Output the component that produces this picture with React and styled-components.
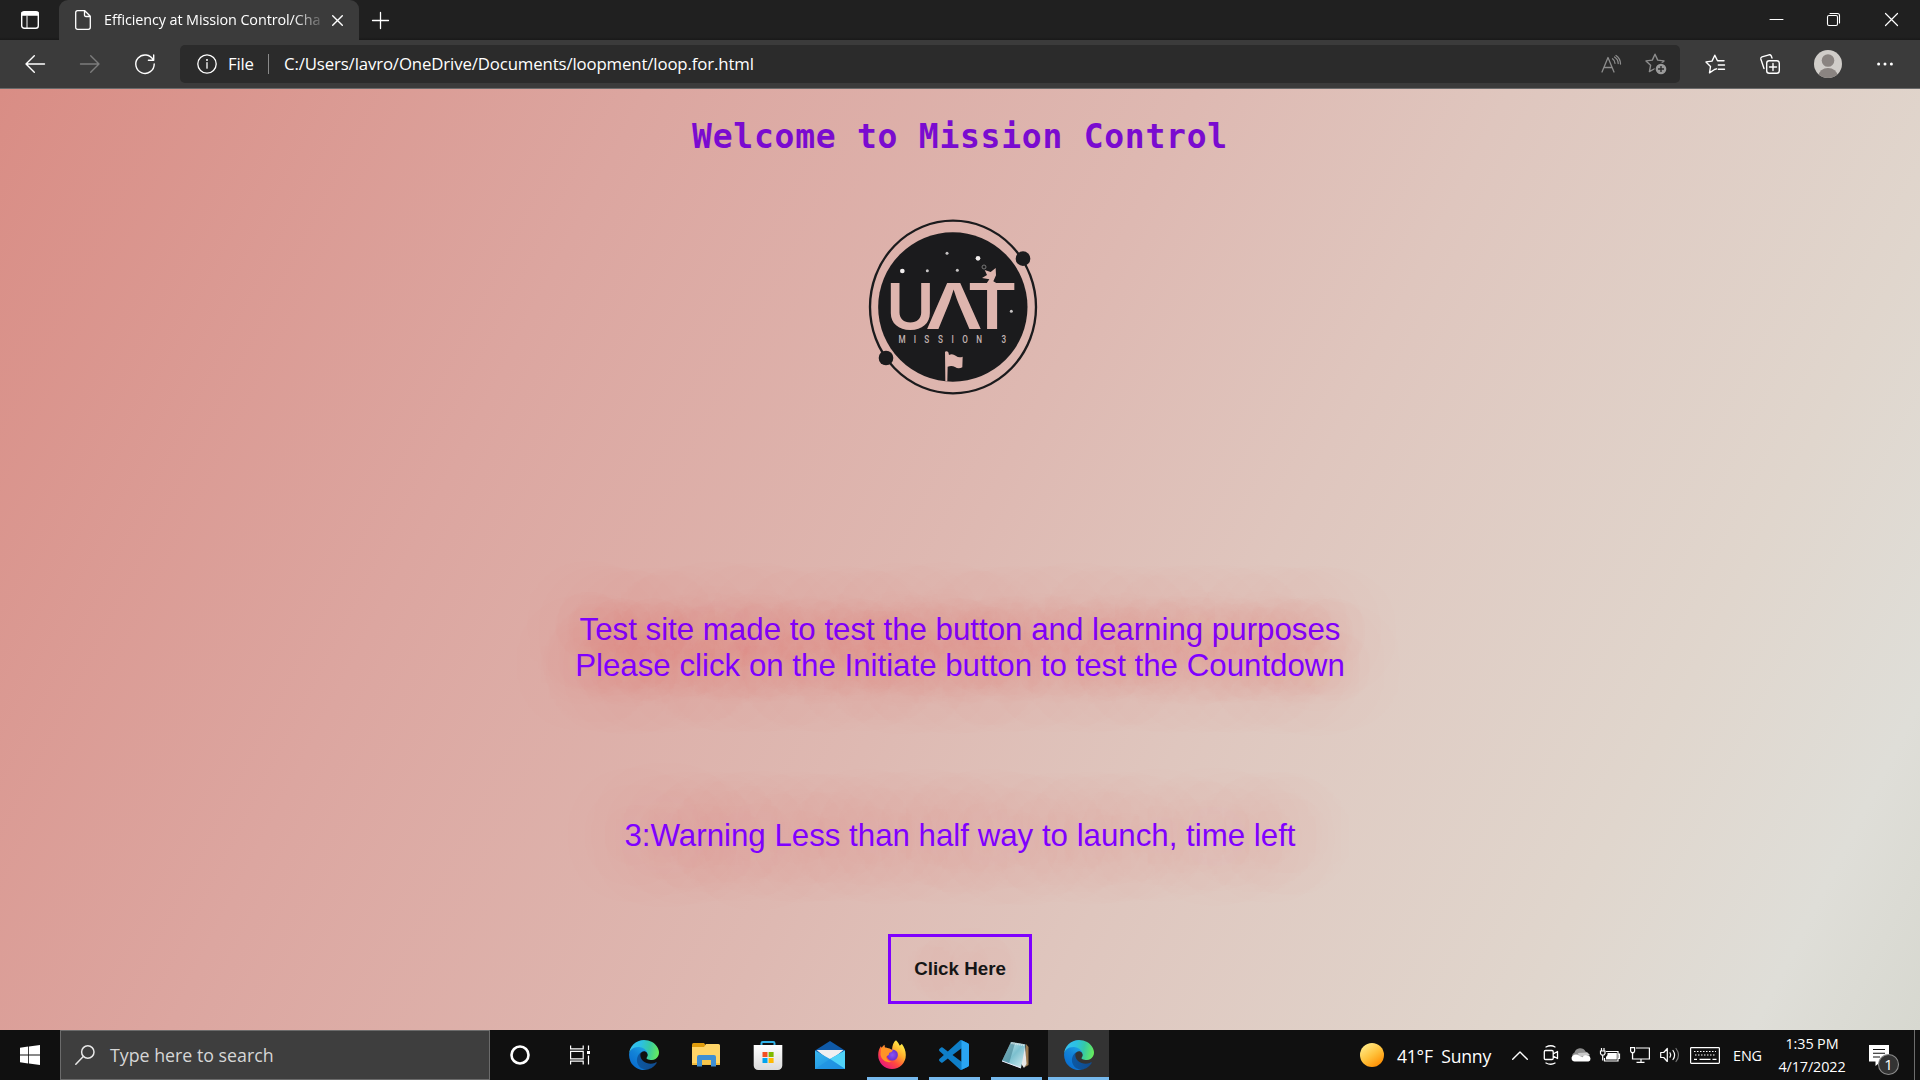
import React from "react";
import styled, { createGlobalStyle } from "styled-components";

const UI = `"Open Sans", "Noto Sans", sans-serif`;
const ARIAL = `"Liberation Sans", Arial, sans-serif`;

const Global = createGlobalStyle`
  * { box-sizing: border-box; }
  body { margin: 0; overflow: hidden; background: #101010; }
  svg { display: block; flex: none; overflow: visible; }
`;

const Screen = styled.div`
  width: 1920px;
  height: 1080px;
  display: flex;
  flex-direction: column;
  font-family: ${UI};
  color: #fff;
`;

/* ---------- browser chrome ---------- */
const TabStrip = styled.header`
  height: 40px;
  flex: none;
  display: flex;
  background: linear-gradient(#202020 37px, #191919);
`;
const TabActions = styled.div`
  width: 59px;
  height: 40px;
  display: flex;
  align-items: center;
  justify-content: center;
`;
const Tab = styled.div`
  width: 300px;
  height: 40px;
  padding: 0 16px;
  border-radius: 9px 9px 0 0;
  background: #3b3b3b;
  display: flex;
  align-items: center;
`;
const TabTitle = styled.span`
  width: 218px;
  margin: 0 11px 0 13px;
  white-space: nowrap;
  font-size: 14.4px;
  line-height: 24px;
  letter-spacing: -0.1px;
  mask-image: linear-gradient(90deg, #000 188px, rgba(0, 0, 0, 0.15) 218px);
`;
const NewTab = styled.div`
  width: 43px;
  display: flex;
  align-items: center;
  justify-content: center;
`;
const WindowControls = styled.div`
  margin-left: auto;
  display: flex;
  height: 39px;
`;
const Control = styled.div`
  width: 57.5px;
  display: flex;
  align-items: center;
  justify-content: center;
`;
const Toolbar = styled.div`
  height: 49px;
  flex: none;
  padding: 5px 8px 5px 7px;
  display: flex;
  background: #3b3b3b;
  border-bottom: 1px solid #6a6a6a;
`;
const ToolButton = styled.div`
  width: ${(p) => p.$w || 55}px;
  height: 37px;
  display: flex;
  align-items: center;
  justify-content: center;
`;
const NavButtons = styled.div`
  width: 173px;
  display: flex;
`;
const AddressBar = styled.div`
  width: 1500px;
  height: 38px;
  padding-left: 17px;
  border-radius: 5px;
  background: #2b2b2b;
  display: flex;
  align-items: center;
`;
const FileLabel = styled.span`
  width: 40px;
  margin-left: 11px;
  padding-bottom: 2px;
  font-size: 16.8px;
  letter-spacing: -0.2px;
`;
const Divider = styled.i`
  width: 1px;
  height: 20px;
  background: #8a8a8a;
`;
const Url = styled.span`
  margin-left: 15px;
  padding-bottom: 2px;
  flex: 1;
  font-size: 16.8px;
  letter-spacing: -0.13px;
  white-space: nowrap;
`;

/* ---------- page ---------- */
const Page = styled.main`
  flex: 1;
  display: flex;
  flex-direction: column;
  align-items: center;
  background: linear-gradient(117deg, #d98d85 0%, #dca6a0 27%, #deb9b2 50%, #dfc6be 63%, #e0d6cd 83%, #dfded8 93%, #d7d8d0 100%);
`;
const Heading = styled.h1`
  margin: 28px 0 0;
  height: 40px;
  font: bold 33px/40px "DejaVu Sans Mono", monospace;
  letter-spacing: 0.74px;
  color: #7a0bd0;
  white-space: pre;
`;
const LogoBox = styled.div`
  margin: 43px 10px 0 0;
`;
const Intro = styled.p`
  margin: 202px 0 0;
  text-align: center;
  font: 31.25px/36px ${ARIAL};
  color: #7f00ff;
  white-space: nowrap;
  text-shadow: 0 0 36px rgba(255, 80, 60, 0.25), 0 0 62px rgba(255, 70, 60, 0.55);
`;
const Countdown = styled(Intro)`
  margin-top: 134px;
  text-shadow: 0 0 62px rgba(255, 60, 65, 0.7);
`;
const LaunchButton = styled.button`
  margin: 80px 0 0;
  width: 144px;
  height: 70px;
  padding: 0;
  border: 3px solid #7f00ff;
  background: transparent;
  font: bold 18.75px/22px ${ARIAL};
  color: #151515;
  text-shadow: 0 0 50px rgba(255, 60, 60, 0.4);
`;

/* ---------- taskbar ---------- */
const Taskbar = styled.footer`
  height: 50px;
  flex: none;
  display: flex;
  background: #101010;
`;
const Cell = styled.div`
  width: ${(p) => p.$w}px;
  height: 50px;
  padding-top: ${(p) => p.$drop || 0}px;
  display: flex;
  align-items: center;
  justify-content: center;
`;
const Search = styled.div`
  width: 430px;
  height: 50px;
  padding-left: 14px;
  border: 1px solid #6b6b6b;
  background: #3e3e3e;
  display: flex;
  align-items: center;
  gap: 15px;
  font-size: 17.8px;
  letter-spacing: 0;
  color: #d6d6d6;
`;
const AppCell = styled.div`
  width: ${(p) => (p.$active ? 61 : 62)}px;
  margin-left: ${(p) => (p.$active ? 1 : 0)}px;
  height: 50px;
  display: flex;
  flex-direction: column;
  align-items: center;
  background: ${(p) => (p.$active ? "#333" : "transparent")};
  padding-top: 10px;
  justify-content: space-between;
`;
const Running = styled.i`
  width: ${(p) => (p.$active ? 61 : 51)}px;
  height: 3px;
  background: ${(p) => (p.$on ? "#76b9ed" : "transparent")};
`;
const Weather = styled.div`
  margin-left: auto;
  width: 145px;
  display: flex;
  align-items: center;
  gap: 13px;
  font-size: 17.6px;
  letter-spacing: -0.25px;
  white-space: pre;
`;
const WeatherText = styled.span`
  padding-top: 1px;
`;
const TrayText = styled.div`
  width: ${(p) => p.$w}px;
  padding-bottom: ${(p) => p.$lift || 0}px;
  display: flex;
  flex-direction: column;
  justify-content: center;
  text-align: center;
  font-size: 14.4px;
  line-height: 23px;
  letter-spacing: -0.12px;
`;
const ShowDesktop = styled.div`
  width: 6px;
  border-left: 1px solid #6d6d6d;
`;

const Line = ({ w, h, d, sw = 1.4, c = "#fff", children }) => (
  <svg width={w} height={h} viewBox={`0 0 ${w} ${h}`} fill="none" stroke={c} strokeWidth={sw} strokeLinecap="round" strokeLinejoin="round">
    {d && <path d={d} />}
    {children}
  </svg>
);

const Logo = () => (
  <svg width="210" height="210" viewBox="0 0 630 630">
    <ellipse cx="309" cy="321" rx="249" ry="259" fill="none" stroke="#1b1b1d" strokeWidth="7" />
    <circle cx="308.500" cy="321" r="224" fill="#1b1b1d" />
    <circle cx="519" cy="176" r="22" fill="#1b1b1d" />
    <circle cx="108" cy="474" r="22" fill="#1b1b1d" />
    <g fill="#deb5ae" fontFamily="Inter, sans-serif" fontWeight="600" fontSize="190">
      <text x="108" y="386" textLength="146" lengthAdjust="spacingAndGlyphs">U</text>
      <text x="226" y="387" textLength="172" lengthAdjust="spacingAndGlyphs">Λ</text>
      <text x="350" y="387" textLength="152" lengthAdjust="spacingAndGlyphs">T</text>
    </g>
    <path d="M404 210l18 6 15-12 1 22-8 18 10 6h-30l8-12-22-4 15-9z" fill="#deb5ae" />
    <circle cx="402" cy="201" r="6" fill="none" stroke="#777" strokeWidth="3" />
    <g fill="#f1eeee">
      <circle cx="157" cy="213" r="7" />
      <circle cx="384" cy="175" r="7" />
      <circle cx="291" cy="160" r="4.500" opacity=".8" />
      <circle cx="232" cy="212" r="4.500" opacity=".8" />
      <circle cx="322" cy="211" r="4.500" opacity=".8" />
      <circle cx="484" cy="334" r="4.500" opacity=".8" />
    </g>
    <text x="208 273 318 377 435 481 541 649" y="428" fontFamily="Roboto, sans-serif" fontWeight="500" fontSize="35" fill="#c4b5b3" transform="scale(.7 1)">MISSION3</text>
    <path d="M285 455q6-4 10 2l2 8q10-6 20 2 10 8 21 3l-1 32q-12 6-22-1-10-6-22-1l-1 44h-6z" fill="#deb5ae" />
  </svg>
);

const EdgeIcon = ({ id }) => (
  <svg width="30" height="30" viewBox="0 0 256 256">
    <defs>
      <linearGradient id={id + "a"} x1="60" y1="178" x2="240" y2="178" gradientUnits="userSpaceOnUse"><stop stopColor="#0c59a4" /><stop offset="1" stopColor="#114a8b" /></linearGradient>
      <linearGradient id={id + "b"} x1="140" y1="90" x2="40" y2="220" gradientUnits="userSpaceOnUse"><stop stopColor="#1b9de2" /><stop offset=".4" stopColor="#1384d8" /><stop offset="1" stopColor="#0a6fd0" /></linearGradient>
      <linearGradient id={id + "c"} x1="10" y1="60" x2="250" y2="110" gradientUnits="userSpaceOnUse"><stop stopColor="#35c1f1" /><stop offset=".35" stopColor="#2cc0e3" /><stop offset=".65" stopColor="#36c9a5" /><stop offset="1" stopColor="#66eb5e" /></linearGradient>
    </defs>
    <path fill={`url(#${id}a)`} d="M231 190.500c-3.400 1.800-6.900 3.400-10.500 4.700a101.500 101.500 0 0 1-35.800 6.400c-47.100 0-88.200-32.400-88.200-74.100.1-11.300 6.300-21.700 16.200-27.200-42.600 1.800-53.600 46.200-53.600 72.200 0 73.600 67.800 81 82.400 81 7.900 0 19.800-2.300 26.900-4.600l1.300-.4a128.300 128.300 0 0 0 66.600-52.900c1.200-1.900.6-4.300-1.200-5.500-1.300-.8-2.800-.8-4.100.4z" />
    <path fill={`url(#${id}b)`} d="M105.700 241.600c-8.900-5.500-16.600-12.800-22.700-21.300-26.300-36-18.400-86.500 17.600-112.800 3.800-2.700 7.700-5.200 11.900-7.200 3.100-1.500 8.500-4.100 15.600-4 10.200.1 19.800 4.900 26 13.200 4.100 5.300 6.300 11.900 6.400 18.700 0-.2 24.500-79.600-80-79.600-43.900 0-80 41.600-80 78.200a130 130 0 0 0 12.100 56c27.600 58.800 94.800 87.600 156.400 67.100-21.100 6.600-44 3.600-62.700-8.100z" />
    <path fill={`url(#${id}c)`} d="M152.300 148.900c-.9 1-3.300 2.500-3.300 5.700 0 2.600 1.700 5.100 4.700 7.200 14.400 10 41.500 8.600 41.600 8.600 10.700 0 21.100-2.900 30.300-8.300 18.800-11 30.400-31.100 30.400-52.900.3-22.400-8-37.300-11.300-43.900C223.500 23.900 177.700 0 128 0 58 0 1 56.200 0 126.200.5 89.700 36.800 60.200 80 60.200c3.500 0 23.500.3 42 10.100 16.300 8.600 24.900 19 30.800 29.200 6.200 10.700 7.300 24.100 7.300 29.500s-2.700 13.300-7.800 19.900z" />
  </svg>
);

const FolderIcon = () => (
  <svg width="30" height="30" viewBox="0 0 30 30">
    <path d="M1 4.500q0-1.500 1.500-1.500H13l1.500 2v5H1z" fill="#e09c0c" />
    <path d="M1 7h12l2-3h12.500q1.500 0 1.500 1.500V25H1z" fill="#ffd467" />
    <path d="M1 23h28v2H1z" fill="#f3bd3d" />
    <path d="M6 26.500V17q0-2 2-2h15q2 0 2 2v9.500h-5V20h-9v6.500z" fill="#3f8fd4" />
    <path d="M11 20h9v4h-9z" fill="#f7c64d" />
  </svg>
);

const StoreIcon = () => (
  <svg width="30" height="30" viewBox="0 0 30 30">
    <defs><linearGradient id="bag" x2="0" y2="1"><stop stopColor="#fff" /><stop offset="1" stopColor="#dadada" /></linearGradient></defs>
    <path d="M8.500 6V3.200q0-1.200 1.200-1.200h10.600q1.200 0 1.200 1.200V6" fill="none" stroke="#2fb0e6" strokeWidth="2" />
    <path d="M.7 5h28.600v20.500a4.500 4.500 0 0 1-4.500 4.500H5.200a4.500 4.500 0 0 1-4.500-4.500z" fill="url(#bag)" />
    <path d="M9.500 12h5v5h-5z" fill="#f25022" />
    <path d="M15.600 12h5v5h-5z" fill="#7fba00" />
    <path d="M9.500 18h5v5h-5z" fill="#00a4ef" />
    <path d="M15.600 18h5v5h-5z" fill="#ffb900" />
  </svg>
);

const MailIcon = () => (
  <svg width="30" height="30" viewBox="0 0 30 30">
    <defs><linearGradient id="env" x2="1" y2="1"><stop stopColor="#38b6ee" /><stop offset="1" stopColor="#1a8ade" /></linearGradient></defs>
    <path d="M0 10.500 15 1l15 9.500v5H0z" fill="#0f5aa8" />
    <path d="M1.500 10h27L15 21z" fill="#efeff1" />
    <path d="M0 10.500 15 19l15-8.500V29H0z" fill="url(#env)" />
    <path d="M30 10.500V29L15 19z" fill="#50d3f8" />
    <path d="M0 29h30L15 19z" fill="#1f90e0" opacity=".65" />
  </svg>
);

const FirefoxIcon = () => (
  <svg width="30" height="30" viewBox="0 0 30 30">
    <defs>
      <linearGradient id="fox" x1=".85" y1=".1" x2=".2" y2=".95"><stop stopColor="#fff04a" /><stop offset=".35" stopColor="#ffa92b" /><stop offset=".65" stopColor="#ff4a3e" /><stop offset="1" stopColor="#e5157f" /></linearGradient>
      <radialGradient id="globe"><stop stopColor="#8a55f5" /><stop offset="1" stopColor="#6a2fd0" /></radialGradient>
    </defs>
    <path d="M19 .3c2 2 3 3.600 3.500 5.200 1.200-.3 2-1 2.300-1.700 2.700 3.800 4 7.300 4 11.200A13.800 13.800 0 0 1 15 29 13.800 13.800 0 0 1 1.200 15c0-4 1.300-7 2.800-9l.3 2.500c.9-1.600 2-3 3.200-3.800L8 8c3-.4 5.200.2 7 2 .3-4.500 1.500-8 4-9.700z" fill="url(#fox)" />
    <circle cx="15.300" cy="15" r="5.600" fill="url(#globe)" />
    <path d="M4 7.500c3.500 0 6-.7 8 1.700l3.700.8c-.2 2-2 2.500-3.700 3 .5 2.500-1.500 2-2.800 4 .5 2.500 3 4.600 5.800 4.600-6 2-10.800-2-11.500-7z" fill="#ff9426" />
  </svg>
);

const CodeIcon = () => (
  <svg width="30" height="30" viewBox="0 0 24 24">
    <path fill="#0f7fc8" d="M23.150 2.587 18.210.21a1.494 1.494 0 0 0-1.705.29l-9.460 8.630-4.120-3.128a.999.999 0 0 0-1.276.057L.327 7.261A1 1 0 0 0 .326 8.740L3.899 12 .326 15.260a1 1 0 0 0 .001 1.479L1.650 17.940a.999.999 0 0 0 1.276.057l4.120-3.128 9.460 8.630a1.492 1.492 0 0 0 1.704.29l4.942-2.377A1.500 1.500 0 0 0 24 20.060V3.939a1.500 1.500 0 0 0-.85-1.352zm-5.146 14.861L10.826 12l7.178-5.448v10.896z" />
    <path fill="#2aa5f2" d="M18 .15 23.150 2.587A1.500 1.500 0 0 1 24 3.940v16.120a1.500 1.500 0 0 1-.85 1.350L18 23.850z" />
  </svg>
);

const NotepadIcon = () => (
  <svg width="30" height="30" viewBox="0 0 30 30">
    <defs><linearGradient id="pad" x2="1" y2="1"><stop stopColor="#d8f3f7" /><stop offset=".5" stopColor="#7cc0cf" /><stop offset="1" stopColor="#d9eff3" /></linearGradient></defs>
    <path d="M25 4l2.500 3v18L24 27z" fill="#9b7b50" />
    <path d="M24 4l1.500 20-2.500 4-4-6z" fill="#e8e8e8" />
    <path d="M10 2l14.500 2.500L20 28 1 21z" fill="url(#pad)" />
    <path d="M10 2 1 21l7 2.400L14 3z" fill="#3e7c8c" opacity=".55" />
    <path d="M10.500 3l13.500 2.300" stroke="#e9e9e9" strokeWidth="2" strokeDasharray="1 1" />
    <path d="M1 21l19 7" stroke="#eef" strokeWidth="1" />
  </svg>
);

const SunIcon = () => (
  <svg width="24" height="24" viewBox="0 0 24 24">
    <defs><linearGradient id="sun" x1=".2" y1=".1" x2=".8" y2=".95"><stop stopColor="#ffe680" /><stop offset=".5" stopColor="#ffc13a" /><stop offset="1" stopColor="#ff8c00" /></linearGradient></defs>
    <circle cx="12" cy="12" r="12" fill="url(#sun)" />
  </svg>
);

const STAR = "M10 1.200l2.700 5.900 6.300.8-4.700 4.400 1.200 6.300L10 15.500l-5.600 3.100 1.200-6.300L1 7.900l6.300-.8z";

export default function App() {
  const apps = [
    { icon: <EdgeIcon id="e1" /> },
    { icon: <FolderIcon /> },
    { icon: <StoreIcon /> },
    { icon: <MailIcon /> },
    { icon: <FirefoxIcon />, on: true },
    { icon: <CodeIcon />, on: true },
    { icon: <NotepadIcon />, on: true },
    { icon: <EdgeIcon id="e2" />, on: true, active: true },
  ];
  return (
    <Screen>
      <Global />
      <TabStrip>
        <TabActions>
          <Line w={18} h={18}>
            <rect x="0.700" y="0.700" width="16.600" height="16.600" rx="2.500" />
            <path d="M1 1.500h16V4H1z" fill="#fff" />
            <path d="M6 5v12" strokeWidth="1" />
          </Line>
        </TabActions>
        <Tab>
          <Line w={16} h={20} sw={1.3} d="M2.500.7h7.300l5.500 5.600v11q0 2-2 2H2.700q-2 0-2-2V2.700q0-2 1.800-2zM9.500 1v4q0 1.500 1.500 1.500h4" />
          <TabTitle>Efficiency at Mission Control/Cha</TabTitle>
          <Line w={11} h={11} d="M.7.7l9.600 9.600M10.300.7L.7 10.300" />
        </Tab>
        <NewTab>
          <Line w={17} h={17} sw={1.3} d="M8.500.5v16M.5 8.500h16" />
        </NewTab>
        <WindowControls>
          <Control><Line w={13} h={2} sw={1} d="M0 .5h13" /></Control>
          <Control>
            <Line w={13} h={13} sw={1.1}>
              <rect x=".5" y="2.500" width="10" height="10" rx="1.500" />
              <path d="M3 .5h7.500q2 0 2 2V10" />
            </Line>
          </Control>
          <Control><Line w={13} h={13} sw={1.2} d="M.5.5l12 12M12.500.5l-12 12" /></Control>
        </WindowControls>
      </TabStrip>
      <Toolbar>
        <NavButtons>
          <ToolButton><Line w={20} h={18} d="M19.500 9H1M9.300.7L1 9l8.300 8.300" /></ToolButton>
          <ToolButton><Line w={20} h={18} c="#7c7c7c" d="M.5 9H19M10.700.7L19 9l-8.300 8.300" /></ToolButton>
          <ToolButton><Line w={20} h={20} d="M18.200 6A9.200 9.200 0 1 0 19.200 10M18.700 1v5.300h-5.300" /></ToolButton>
        </NavButtons>
        <AddressBar>
          <Line w={20} h={20} sw={1.3}>
            <circle cx="10" cy="10" r="9.200" />
            <path d="M10 8.700v5.500" />
            <circle cx="10" cy="6" r=".4" />
          </Line>
          <FileLabel>File</FileLabel>
          <Divider />
          <Url>C:/Users/lavro/OneDrive/Documents/loopment/loop.for.html</Url>
          <ToolButton $w={42}>
            <Line w={20} h={18} sw={1.3} c="#8d8d8d" d="M1 17L7 2.500 13 17M3 12.500h8M11.500 3.800q2.500 1.700 2.500 4.500M13.500 2q3.700 2.400 3.700 6.500M15 .5q4.500 3 4.500 8.500" />
          </ToolButton>
          <ToolButton $w={48}>
            <svg width="22" height="22" viewBox="0 0 22 22" fill="none" stroke="#8d8d8d" strokeWidth="1.400" strokeLinejoin="round">
              <path d={STAR} />
              <circle cx="16" cy="16" r="6.500" fill="#2b2b2b" stroke="none" />
              <circle cx="16" cy="16" r="5.300" fill="#9a9a9a" stroke="none" />
              <path d="M16 13v6M13 16h6" stroke="#2b2b2b" />
            </svg>
          </ToolButton>
        </AddressBar>
        <ToolButton $w={70}>
          <Line w={20} h={20}>
            <path d="M11.500 14.800L9.500 15.500l-5 3.300 1-6.300L1 7.900l6-.8L9.800 1.200l2.700 5.600H19M13.300 11H19.500M13.300 15.200h6.200" />
          </Line>
        </ToolButton>
        <ToolButton $w={40}>
          <Line w={20} h={20}>
            <rect x="6.700" y="6.700" width="12.600" height="12.600" rx="2.500" />
            <path d="M13 9.500v7M9.500 13h7M4 14.500L.8 5Q.5 3.500 2 2.800L9 .8q1.500-.3 2.200 1l.8 2.200" />
          </Line>
        </ToolButton>
        <ToolButton $w={76}>
          <svg width="28" height="28" viewBox="0 0 28 28">
            <clipPath id="face"><circle cx="14" cy="14" r="14" /></clipPath>
            <circle cx="14" cy="14" r="14" fill="#d0cdc9" />
            <g clipPath="url(#face)" fill="#8a8481"><circle cx="14" cy="10.500" r="6.300" /><ellipse cx="14" cy="26" rx="9.500" ry="8" /></g>
          </svg>
        </ToolButton>
        <ToolButton $w={38}>
          <svg width="16" height="4" viewBox="0 0 16 4" fill="#fff"><circle cx="1.600" cy="2" r="1.500" /><circle cx="8" cy="2" r="1.500" /><circle cx="14.400" cy="2" r="1.500" /></svg>
        </ToolButton>
      </Toolbar>

      <Page>
        <Heading>Welcome to Mission Control</Heading>
        <LogoBox><Logo /></LogoBox>
        <Intro>
          Test site made to test the button and learning purposes
          <br />
          Please click on the Initiate button to test the Countdown
        </Intro>
        <Countdown>3:Warning Less than half way to launch, time left</Countdown>
        <LaunchButton>Click Here</LaunchButton>
      </Page>

      <Taskbar>
        <Cell $w={60}>
          <svg width="20" height="20" viewBox="0 0 20 20" fill="#fff"><path d="M0 2.800l8.200-1.200v8H0zM9 1.500L20 0v9.600H9zM0 10.400h8.200v8L0 17.200zM9 10.400h11V20L9 18.500z" /></svg>
        </Cell>
        <Search>
          <Line w={20} h={20} sw={1.5} c="#e8e8e8"><circle cx="12.800" cy="7" r="6.200" /><path d="M8.300 11.500L.8 19.200" /></Line>
          Type here to search
        </Search>
        <Cell $w={60}>
          <svg width="20" height="20" viewBox="0 0 20 20"><circle cx="10" cy="10" r="8.500" fill="none" stroke="#fff" strokeWidth="2.600" /></svg>
        </Cell>
        <Cell $w={60}>
          <svg width="20" height="20" viewBox="0 0 20 20" fill="none" stroke="#fff" strokeWidth="1.200">
            <path d="M.6.500v3.300h12.600V.5M.6 6.300h12.600v7.500H.6zM.6 19.500v-3.300h12.600v3.300M18.500.5v4.500M18.500 10.500v9" />
            <path d="M17 6h3v3h-3z" fill="#fff" stroke="none" />
          </svg>
        </Cell>
        <Cell $w={3} />
        {apps.map((a, i) => (
          <AppCell key={i} $active={a.active}>
            {a.icon}
            <Running $on={a.on} $active={a.active} />
          </AppCell>
        ))}
        <Weather><SunIcon /><WeatherText>{"41°F  Sunny"}</WeatherText></Weather>
        <Cell $w={30}><Line w={16} h={9} sw={1.4} d="M.7 8.300L8 1l7.300 7.300" /></Cell>
        <Cell $w={32}>
          <Line w={16} h={20} sw={1.3} d="M3 2Q8-.5 12 2M3 18q5 2.500 9 0M2.500 5.500H9q1.200 0 1.200 1.200v6.600q0 1.200-1.200 1.200H2.500q-1.200 0-1.200-1.200V6.700q0-1.200 1.200-1.200zM10.500 8.800l4-2.300v7l-4-2.300" />
        </Cell>
        <Cell $w={28}>
          <svg width="20" height="14" viewBox="0 0 20 14">
            <path d="M4 12a4 4 0 0 1-.5-7.500A6 6 0 0 1 14.500 3.500 5 5 0 0 1 17 12z" fill="#8d8d8d" />
            <path d="M7 5L16 4.500 19 7 8 9z" fill="#c9c9c9" />
            <path d="M3.500 13.500a3.200 3.200 0 0 1-2-5.500 5 5 0 0 1 7 0l3 1.200a4 4 0 0 1 5.500-1.500 3 3 0 0 1 .5 5.800z" fill="#fff" />
          </svg>
        </Cell>
        <Cell $w={30}>
          <svg width="20" height="15" viewBox="0 0 20 15" fill="none" stroke="#fff" strokeWidth="1.200">
            <path d="M6 3.500h12V13H4.500v-3M18 6h1.500v4.500H18" />
            <path d="M7.500 5h9.300v6.500H6V9l1.500-2z" fill="#fff" stroke="none" />
            <path d="M1.500 0v2.500M4 0v2.500M.5 3h4.500v2.500l-1 1.500H1.500l-1-1.500zM2.700 7v5.500" />
          </svg>
        </Cell>
        <Cell $w={30}>
          <svg width="20" height="16" viewBox="0 0 20 16" fill="none" stroke="#fff" strokeWidth="1.200">
            <path d="M6 1h13.400v11H2.500V7M11 12v3M6.500 15.300h8M.6.600h4v3.500l-.8 1.500H1.500L.6 4.100zM2.600 5.500V12" />
          </svg>
        </Cell>
        <Cell $w={30}>
          <Line w={20} h={16} sw={1.2} d="M.7 5.500h3L7.300 1.500v13L3.700 10.500h-3z">
            <path d="M10 5.800q1.500 2.200 0 4.400M13 3.500q3.200 4.500 0 9" />
            <path d="M16 1.500q5 6.500 0 13" stroke="#777" />
          </Line>
        </Cell>
        <Cell $w={40}>
          <svg width="30" height="17" viewBox="0 0 30 17" fill="none" stroke="#fff" strokeWidth="1.200">
            <rect x=".6" y=".6" width="28.800" height="15.800" rx=".8" />
            <path d="M4 4.500h22M5 8h21" strokeDasharray="1.500 1.500" />
            <path d="M4 12.300h3M9.500 12.300h11M22.500 12.300h4" />
          </svg>
        </Cell>
        <TrayText $w={45}>ENG</TrayText>
        <TrayText $w={84} $lift={1}><span>1:35 PM</span><span>4/17/2022</span></TrayText>
        <Cell $w={60} $drop={9}>
          <svg width="30" height="30" viewBox="0 0 30 30">
            <path d="M0 0h20v16.500H12L6.500 21v-4.500H0z" fill="#fff" />
            <path d="M4 4.500h12M4 8.300h12M4 12h7" stroke="#101010" strokeWidth="1.100" />
            <circle cx="19.500" cy="19.500" r="10" fill="#333" stroke="#8b8b8b" strokeWidth="1.100" />
            <text x="19.500" y="25" textAnchor="middle" fontSize="15" fill="#fff" fontFamily="Open Sans, sans-serif">1</text>
          </svg>
        </Cell>
        <ShowDesktop />
      </Taskbar>
    </Screen>
  );
}
